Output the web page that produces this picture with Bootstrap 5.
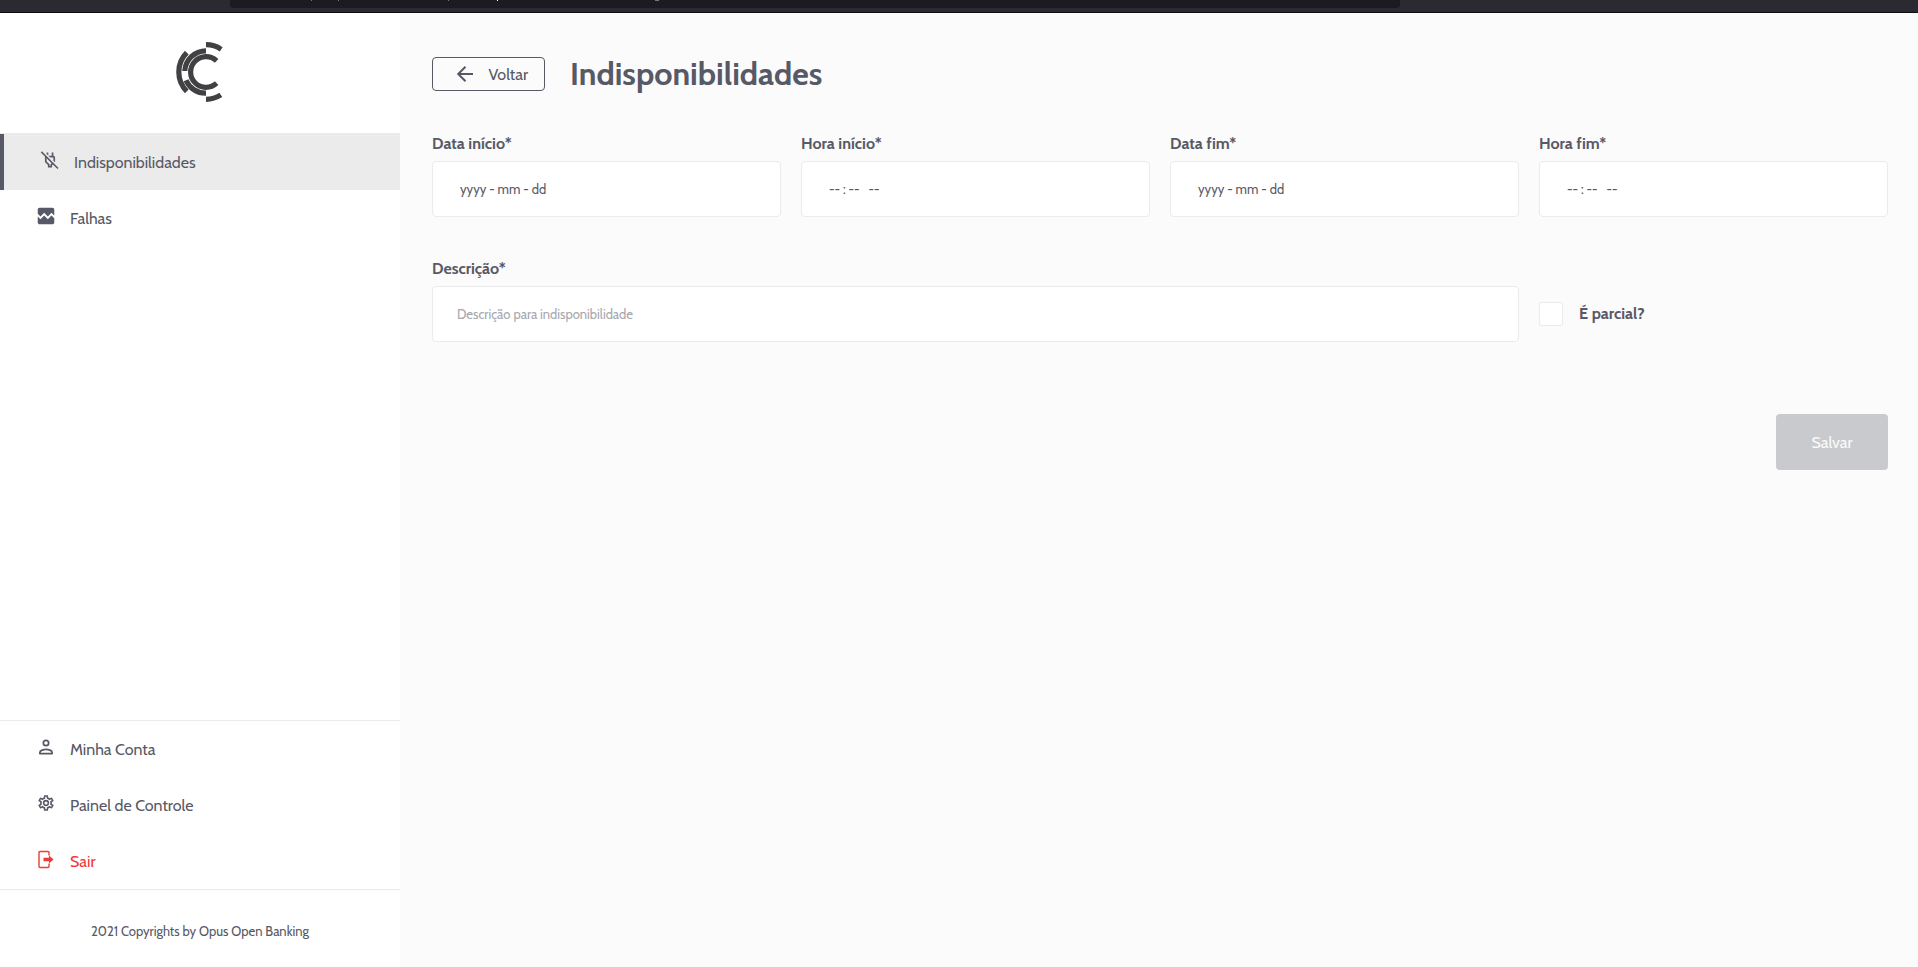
<!DOCTYPE html>
<html lang="pt-BR">
<head>
<meta charset="utf-8">
<meta name="viewport" content="width=device-width, initial-scale=1">
<title>Indisponibilidades</title>
<link href="https://cdn.jsdelivr.net/npm/bootstrap@5.3.0/dist/css/bootstrap.min.css" rel="stylesheet">
<style>
  body { font-family: Cabin, Lato, sans-serif; font-size: 16px; line-height: 24px; color: #585966; background: #fbfbfb; }
  .chrome-bar { height: 13px; background: #2b2a33; border-bottom: 1px solid #0c0c0d; }
  .url-field { width: 61%; height: 8px; margin-left: 12%; background: #1c1b22; border-radius: 0 0 4px 4px; }
  .url-field svg { display: block; }
  .side-panel { width: 400px; background: #fff; }
  .brand { height: 120px; padding-top: 29px; }
  .side-link { height: 56px; padding-left: 35px; gap: 13px; color: #585966; text-decoration: none; }
  .side-link svg { width: 22px; height: 22px; margin-bottom: 4px; fill: currentColor; }
  .side-link span, .btn-back span { padding-top: 2px; }
  .side-link.current { background: #ebebeb; border-left: 4px solid #585966; }
  .side-link.leave { color: #f03a3a; }
  .active-wrap { padding-top: 1px; background: #ebebeb; }
  .side-bottom { border-top: 1px solid #ebebeb; }
  .copyright { height: 78px; padding-top: 4px; border-top: 1px solid #ebebeb; font-size: 13px; }
  .content { padding: 40px 30px 32px 32px; }
  .head-row { height: 42px; gap: 25px; }
  .btn-back { width: 113px; height: 34px; padding: 0 16px 0 20px; border: 1px solid #585966; border-radius: 4px; color: #585966; background: transparent; }
  .page-title { font-size: 32px; line-height: 42px; font-weight: 700; }
  .form-grid { display: grid; grid-template-columns: repeat(4, minmax(0, 1fr)); column-gap: 20px; row-gap: 40px; margin-top: 37px; }
  .form-grid label { font-weight: 700; line-height: 24px; }
  .field-label { display: block; margin-bottom: 5px; }
  .wide-field { grid-column: span 3; }
  .form-grid .form-control { height: 56px; padding: 0 27px; border: 1px solid #ebebeb; border-radius: 4px; background: #fff; font-size: 13px; color: #585966; }
  .form-grid .form-control::placeholder { color: #585966; opacity: 1; }
  .form-grid .wide-field .form-control { padding: 0 24px; }
  .form-grid .wide-field .form-control::placeholder { color: #a7a7ae; }
  .check-row { gap: 16px; padding-top: 28px; }
  .check-row .form-check-input { width: 24px; height: 24px; margin: 0; border: 1px solid #ebebeb; border-radius: 2px; background-color: #fff; }
  .btn-save, .btn-save:disabled { width: 112px; height: 56px; margin-top: 72px; padding-top: 8px; border: 0; border-radius: 4px; background: #c9cacd; color: #fafafa; opacity: 1; }
</style>
</head>
<body>
<div class="d-flex flex-column min-vh-100">
  <div class="chrome-bar">
    <div class="url-field">
      <svg width="440" height="1" aria-hidden="true"><path d="M81 0h1v1h-1zM108 0h1v1h-1zM218 0h1v1h-1zM425 0h4v1h-4z" fill="#77777c"/><path d="M267 0h1v1h-1z" fill="#fff"/></svg>
    </div>
  </div>
  <div class="d-flex flex-grow-1">
    <aside class="side-panel d-flex flex-column flex-shrink-0">
      <div class="brand text-center">
        <svg class="d-block mx-auto" width="48" height="60" viewBox="0 0 48 60" fill="none" stroke="#414042" stroke-width="5.2" role="img" aria-label="Opus">
          <path d="M40.6 18.8A15.4 15.4 0 1 0 40.6 41.2"/>
          <path d="M30 8.8A21.2 21.2 0 0 0 8.8 29M10 38.2A21.2 21.2 0 0 0 30 51.2"/>
          <path d="M30 2.7A27.3 27.3 0 0 1 45.2 7.3M30 57.3A27.3 27.3 0 0 0 44.8 52.9M10.8 10.7A27.3 27.3 0 0 0 10.8 49.3"/>
        </svg>
      </div>
      <nav class="d-flex flex-column" aria-label="Principal">
        <div class="active-wrap">
          <a class="side-link current d-flex align-items-center" href="#" aria-current="page">
            <svg viewBox="-1 -1 26 26"><path d="M22.11 21.46L2.39 1.73L1.11 3L6.25 8.14C6.1 8.41 6 8.7 6 9V14.5L9.5 18V21H14.5V18L15.31 17.2L20.84 22.73L22.11 21.46M13.09 16.59L12.5 17.17V19H11.5V17.17L8 13.65V9.89L13.89 15.78L13.09 16.59M12.2 9L10.2 7H14V3H16V7C17.1 7 18 7.9 18 9V14.5L17.85 14.65L16 12.8V9H12.2M10 6.8L8 4.8V3H10V6.8Z"/></svg>
            <span>Indisponibilidades</span>
          </a>
        </div>
        <a class="side-link d-flex align-items-center" href="#">
          <svg viewBox="0 0 24 24"><path d="M21 5v6.590l-3-3.010-4 4.010-4-4-4 4-3-3.010V5c0-1.100.9-2 2-2h14c1.100 0 2 .9 2 2zm-3 6.420 3 3.010V19c0 1.100-.9 2-2 2H5c-1.100 0-2-.9-2-2v-6.580l3 2.990 4-4 4 4z"/></svg>
          <span>Falhas</span>
        </a>
      </nav>
      <nav class="side-bottom d-flex flex-column mt-auto" aria-label="Conta">
        <a class="side-link d-flex align-items-center" href="#">
          <svg viewBox="0 0 24 24"><g fill="none" stroke="currentColor" stroke-width="1.900"><circle cx="12" cy="7.700" r="2.900"/><path d="M5.300 19.200v-1.300c0-2.200 4.300-3.200 6.700-3.200s6.700 1 6.700 3.200v1.300z" stroke-linejoin="round"/></g></svg>
          <span>Minha Conta</span>
        </a>
        <a class="side-link d-flex align-items-center" href="#">
          <svg viewBox="-2 -2 28 28"><path d="M12,8A4,4 0 0,1 16,12A4,4 0 0,1 12,16A4,4 0 0,1 8,12A4,4 0 0,1 12,8M12,10A2,2 0 0,0 10,12A2,2 0 0,0 12,14A2,2 0 0,0 14,12A2,2 0 0,0 12,10M10,22C9.75,22 9.54,21.82 9.5,21.58L9.13,18.93C8.5,18.68 7.96,18.34 7.44,17.94L4.95,18.95C4.73,19.03 4.46,18.95 4.34,18.73L2.34,15.27C2.21,15.05 2.27,14.78 2.46,14.63L4.57,12.97L4.5,12L4.57,11L2.46,9.37C2.27,9.22 2.21,8.95 2.34,8.73L4.34,5.27C4.46,5.05 4.73,4.96 4.95,5.05L7.44,6.05C7.96,5.66 8.5,5.32 9.13,5.07L9.5,2.42C9.54,2.18 9.75,2 10,2H14C14.25,2 14.46,2.18 14.5,2.42L14.87,5.07C15.5,5.32 16.04,5.66 16.56,6.05L19.05,5.05C19.27,4.96 19.54,5.05 19.66,5.27L21.66,8.73C21.79,8.95 21.73,9.22 21.54,9.37L19.43,11L19.5,12L19.43,13L21.54,14.63C21.73,14.78 21.79,15.05 21.66,15.27L19.66,18.73C19.54,18.95 19.27,19.04 19.05,18.95L16.56,17.95C16.04,18.34 15.5,18.68 14.87,18.93L14.5,21.58C14.46,21.82 14.25,22 14,22H10M11.25,4L10.88,6.61C9.68,6.86 8.62,7.5 7.85,8.39L5.44,7.35L4.69,8.65L6.8,10.2C6.4,11.37 6.4,12.64 6.8,13.8L4.68,15.36L5.43,16.66L7.86,15.62C8.63,16.5 9.68,17.14 10.87,17.38L11.24,20H12.76L13.13,17.39C14.32,17.14 15.37,16.5 16.14,15.62L18.57,16.66L19.32,15.36L17.2,13.81C17.6,12.64 17.6,11.37 17.2,10.2L19.31,8.65L18.56,7.35L16.15,8.39C15.38,7.5 14.32,6.86 13.12,6.62L12.75,4H11.25Z"/></svg>
          <span>Painel de Controle</span>
        </a>
        <a class="side-link leave d-flex align-items-center" href="#">
          <svg viewBox="0 0 22 22"><path d="M14 7.500V4.500a1 1 0 0 0-1-1H5a1 1 0 0 0-1 1v14a1 1 0 0 0 1 1h8a1 1 0 0 0 1-1V15.500" fill="none" stroke="currentColor" stroke-width="1.400"/><path d="M8.500 9.800H14V7.500l4.600 4-4.600 4v-2.300H8.500z"/></svg>
          <span>Sair</span>
        </a>
      </nav>
      <div class="copyright d-flex align-items-center justify-content-center">2021 Copyrights by Opus Open Banking</div>
    </aside>
    <main class="content flex-grow-1">
      <div class="head-row d-flex align-items-center">
        <button type="button" class="btn btn-back d-flex align-items-center justify-content-between">
          <svg width="24" height="24" viewBox="0 0 24 24" fill="none" stroke="currentColor" stroke-width="2" aria-hidden="true"><path d="M20 12H5.500M12.500 4.700 5.200 12l7.300 7.300"/></svg>
          <span>Voltar</span>
        </button>
        <h1 class="page-title mb-0">Indisponibilidades</h1>
      </div>
      <form>
        <div class="form-grid">
          <div>
            <label class="field-label" for="startDate">Data início*</label>
            <input class="form-control" id="startDate" type="text" placeholder="yyyy - mm - dd">
          </div>
          <div>
            <label class="field-label" for="startTime">Hora início*</label>
            <input class="form-control" id="startTime" type="text" placeholder="-- : --&nbsp;&nbsp; --">
          </div>
          <div>
            <label class="field-label" for="endDate">Data fim*</label>
            <input class="form-control" id="endDate" type="text" placeholder="yyyy - mm - dd">
          </div>
          <div>
            <label class="field-label" for="endTime">Hora fim*</label>
            <input class="form-control" id="endTime" type="text" placeholder="-- : --&nbsp;&nbsp; --">
          </div>
          <div class="wide-field">
            <label class="field-label" for="description">Descrição*</label>
            <input class="form-control" id="description" type="text" placeholder="Descrição para indisponibilidade">
          </div>
          <div class="check-row d-flex align-items-center">
            <input class="form-check-input" id="partial" type="checkbox">
            <label for="partial">É parcial?</label>
          </div>
        </div>
        <div class="d-flex justify-content-end">
          <button type="submit" class="btn btn-save" disabled>Salvar</button>
        </div>
      </form>
    </main>
  </div>
</div>
<script src="https://cdn.jsdelivr.net/npm/bootstrap@5.3.0/dist/js/bootstrap.bundle.min.js"></script>
</body>
</html>
